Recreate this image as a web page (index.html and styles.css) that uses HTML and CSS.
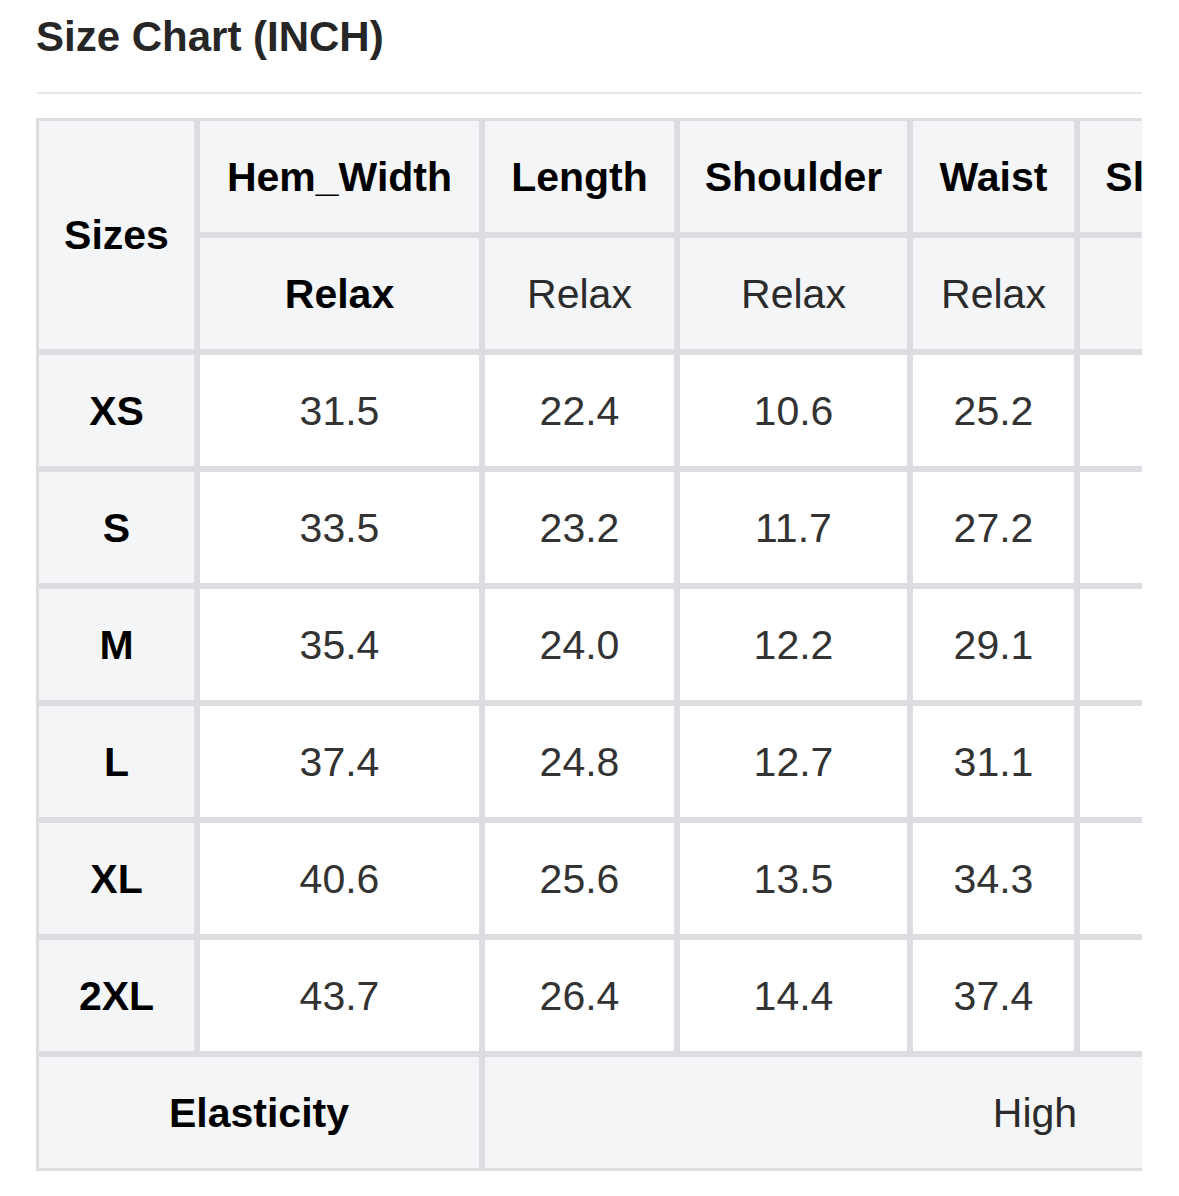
FILE: index.html
```html
<!DOCTYPE html>
<html lang="en">
<head>
<meta charset="utf-8">
<title>Size Chart (INCH)</title>
<link rel="stylesheet" href="styles.css">
</head>
<body>
<div class="chart">
  <h2 class="chart-title">Size Chart (INCH)</h2>
  <div class="rule"></div>
  <div class="table-wrap">
    <table class="size-table">
      <colgroup>
        <col class="c-size">
        <col class="c-hem">
        <col class="c-length">
        <col class="c-shoulder">
        <col class="c-waist">
        <col class="c-sleeve">
        <col class="c-hip">
      </colgroup>
      <tr>
        <th class="head" rowspan="2">Sizes</th>
        <th class="head">Hem_Width</th>
        <th class="head">Length</th>
        <th class="head">Shoulder</th>
        <th class="head">Waist</th>
        <th class="head">Sleeve_Length</th>
        <th class="head">Hip</th>
      </tr>
      <tr>
        <th class="head">Relax</th>
        <td class="head sub">Relax</td>
        <td class="head sub">Relax</td>
        <td class="head sub">Relax</td>
        <td class="head sub">Relax</td>
        <td class="head sub">Relax</td>
      </tr>
      <tr><th class="head">XS</th><td>31.5</td><td>22.4</td><td>10.6</td><td>25.2</td><td>23.6</td><td>33.1</td></tr>
      <tr><th class="head">S</th><td>33.5</td><td>23.2</td><td>11.7</td><td>27.2</td><td>24.0</td><td>35.0</td></tr>
      <tr><th class="head">M</th><td>35.4</td><td>24.0</td><td>12.2</td><td>29.1</td><td>24.4</td><td>37.0</td></tr>
      <tr><th class="head">L</th><td>37.4</td><td>24.8</td><td>12.7</td><td>31.1</td><td>24.8</td><td>39.0</td></tr>
      <tr><th class="head">XL</th><td>40.6</td><td>25.6</td><td>13.5</td><td>34.3</td><td>25.2</td><td>42.1</td></tr>
      <tr><th class="head">2XL</th><td>43.7</td><td>26.4</td><td>14.4</td><td>37.4</td><td>25.6</td><td>45.3</td></tr>
      <tr>
        <th class="head" colspan="2">Elasticity</th>
        <td class="head sub" colspan="5">High</td>
      </tr>
    </table>
  </div>
</div>
</body>
</html>
```

FILE: styles.css
```css
html, body {
  margin: 0;
  padding: 0;
  background: #ffffff;
}

body {
  font-family: "Liberation Sans", Arial, Helvetica, sans-serif;
}

.chart {
  width: 1106px;
  padding-left: 36px;
  padding-top: 13px;
}

.chart-title {
  margin: 0;
  font-size: 42px;
  line-height: 48px;
  font-weight: bold;
  color: #262626;
}

.rule {
  height: 2px;
  background: #e6e6e6;
  margin-top: 31px;
  margin-left: 1px;
}

.table-wrap {
  margin-top: 24px;
  overflow: hidden;
  width: 1106px;
}

.size-table {
  table-layout: fixed;
  width: 1552px;
  border-collapse: separate;
  border-spacing: 0;
}

.c-size { width: 161px; }
.c-hem { width: 285px; }
.c-length { width: 195px; }
.c-shoulder { width: 233px; }
.c-waist { width: 167px; }
.c-sleeve { width: 346px; }
.c-hip { width: 165px; }

.size-table tr {
  height: 117px;
}

.size-table th,
.size-table td {
  border: 3px solid #dcdde0;
  padding: 0 20px;
  text-align: center;
  vertical-align: middle;
  font-size: 41px;
  line-height: 48px;
  white-space: nowrap;
  overflow: hidden;
}

.size-table th {
  font-weight: bold;
  color: #000000;
}

.size-table td {
  font-weight: normal;
  color: #333333;
  background: #ffffff;
}

.size-table .head {
  background: #f4f5f7;
}

.size-table .sub {
  color: #2b2b2b;
}
```
